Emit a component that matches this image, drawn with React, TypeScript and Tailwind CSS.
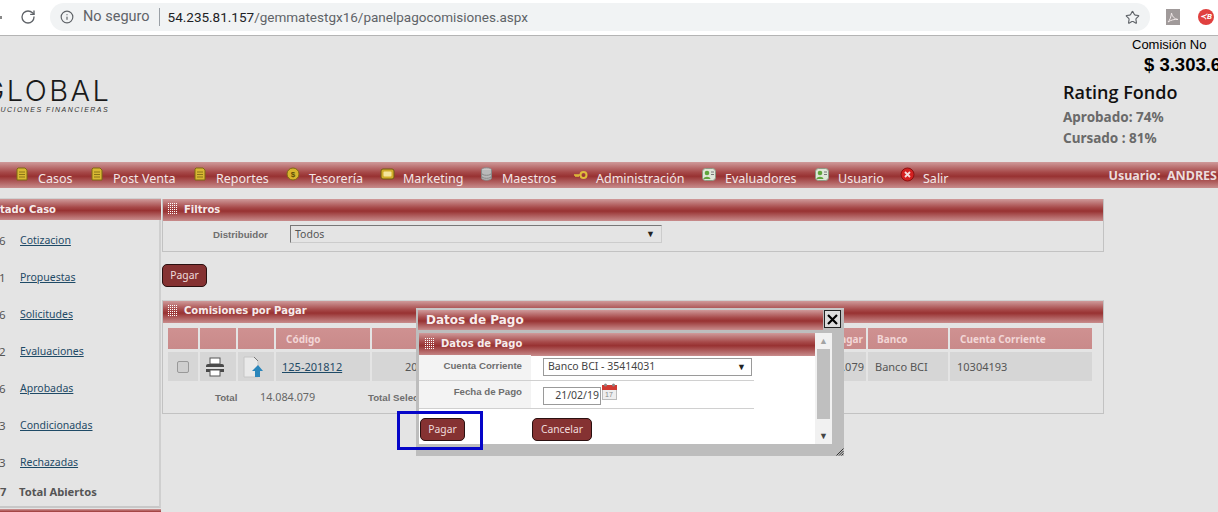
import { Info, RotateCw, Star } from "lucide-react";

const body = "font-['Noto_Sans',sans-serif]";
const bar = "bg-[linear-gradient(#cf9a9a,#a64848_40%,#983232_55%,#c88c8c)]";

function Grip() {
  return (
    <svg width="9" height="11" className="shrink-0">
      <defs>
        <pattern id="gp" width="2" height="2" patternUnits="userSpaceOnUse">
          <rect width="1" height="1" fill="#fff" />
        </pattern>
      </defs>
      <rect width="9" height="11" fill="url(#gp)" />
    </svg>
  );
}

function DocIcon() {
  return (
    <svg width="14" height="15" viewBox="0 0 14 15" className="shrink-0">
      <path d="M3 1h7l2 2v10H2V2z" fill="#d8b832" stroke="#7d6a14" />
      <path d="M4 5h6M4 7.5h6M4 10h6" stroke="#8a7518" />
    </svg>
  );
}
function CoinIcon() {
  return (
    <svg width="14" height="15" viewBox="0 0 14 15" className="shrink-0">
      <circle cx="7" cy="7" r="6" fill="#d8b42c" stroke="#7d6a14" />
      <text x="7" y="10" textAnchor="middle" fontSize="8" fontWeight="700" fill="#5c4c08" fontFamily="Liberation Sans">$</text>
    </svg>
  );
}
function ScreenIcon() {
  return (
    <svg width="15" height="13" viewBox="0 0 15 13" className="shrink-0">
      <rect x="1" y="1" width="13" height="10" rx="2" fill="#d2ae2a" stroke="#6f5d10" />
      <rect x="3.5" y="3.5" width="8" height="5" rx="1" fill="#f5e59a" />
    </svg>
  );
}
function DbIcon() {
  return (
    <svg width="13" height="15" viewBox="0 0 13 15" className="shrink-0">
      <ellipse cx="6.5" cy="3" rx="5" ry="2.2" fill="#c9c9c9" stroke="#888" />
      <path d="M1.500 3v8c0 1.300 2.200 2.300 5 2.300s5-1 5-2.300V3" fill="#b9b9b9" stroke="#888" />
      <path d="M1.500 6c0 1.300 2.200 2.300 5 2.300s5-1 5-2.300M1.500 9c0 1.300 2.200 2.300 5 2.300s5-1 5-2.300" fill="none" stroke="#888" />
    </svg>
  );
}
function KeyIcon() {
  return (
    <svg width="15" height="10" viewBox="0 0 15 10" className="shrink-0">
      <circle cx="10.500" cy="5" r="3" fill="none" stroke="#e0bd3a" strokeWidth="2" />
      <path d="M8 5H1M3 5v2M5 5v2" stroke="#e0bd3a" strokeWidth="1.500" />
    </svg>
  );
}
function UserIcon() {
  return (
    <svg width="14" height="13" viewBox="0 0 14 13" className="shrink-0">
      <rect x="0.500" y="0.500" width="13" height="12" rx="3" fill="#dfe7d8" stroke="#8c9a84" />
      <circle cx="5" cy="5" r="2.300" fill="#5fa53c" />
      <path d="M1.500 11c.6-3 6.400-3 7 0z" fill="#5fa53c" />
      <path d="M9 4h3M9 6.500h3" stroke="#777" />
    </svg>
  );
}
function CloseIcon() {
  return (
    <svg width="15" height="15" viewBox="0 0 15 15" className="shrink-0">
      <circle cx="7.500" cy="7.500" r="6.500" fill="#d42020" stroke="#8c1010" />
      <path d="M5 5l5 5M10 5l-5 5" stroke="#f6dede" strokeWidth="1.800" />
    </svg>
  );
}

const menu: [string, React.ReactNode, string][] = [
  ["Casos", <DocIcon />, "w-[36px]"],
  ["Post Venta", <DocIcon />, "w-[64px]"],
  ["Reportes", <DocIcon />, "w-[54px]"],
  ["Tesorería", <CoinIcon />, "w-[55px]"],
  ["Marketing", <ScreenIcon />, "w-[60px]"],
  ["Maestros", <DbIcon />, "w-[55px]"],
  ["Administración", <KeyIcon />, "w-[90px]"],
  ["Evaluadores", <UserIcon />, "w-[74px]"],
  ["Usuario", <UserIcon />, "w-[46px]"],
  ["Salir", <CloseIcon />, "w-[28px]"],
];

const states: [string, string][] = [
  ["6", "Cotizacion"],
  ["1", "Propuestas"],
  ["6", "Solicitudes"],
  ["2", "Evaluaciones"],
  ["6", "Aprobadas"],
  ["3", "Condicionadas"],
  ["3", "Rechazadas"],
];

function Btn({ children, className = "" }: { children: React.ReactNode; className?: string }) {
  return (
    <div className={`h-[23px] flex items-center justify-center rounded-[5px] border border-[#2a1010] bg-[#853232] text-[#f0dcdc] text-[10.300px] ${className}`}>
      {children}
    </div>
  );
}

function PanelHead({ title, className = "", textClass = "-mt-[1px]" }: { title: string; className?: string; textClass?: string }) {
  return (
    <div className={`h-[22px] flex items-center pl-[5px] gap-[7px] ${bar} ${className}`}>
      <div className="-mt-[3px]"><Grip /></div>
      <span className={`${textClass} font-['DejaVu_Sans',sans-serif] font-bold text-[10px] text-[#f6ecec]`}>{title}</span>
    </div>
  );
}

export default function App() {
  const th = "h-[21px] pt-[1px] bg-[linear-gradient(#cf9191,#c98a8a)] flex items-center text-[10px] font-bold text-[#f2d6d6]";
  const td = "h-[29px] pt-[1px] bg-[#d6d6d6] flex items-center text-[11px] text-[#555]";
  const label = "font-['Liberation_Sans',sans-serif] font-bold text-[9.700px] text-[#6e6e6e]";
  return (
    <div className={`relative w-[1218px] h-[512px] overflow-hidden bg-[#e4e4e4] ${body}`}>
      {/* browser toolbar */}
      <div className="h-[36px] bg-white border-b border-b-[#b4b4b4] flex items-center font-['Roboto',sans-serif]">
        <div className="w-[2px] h-[3px] bg-[#888] shrink-0" />
        <RotateCw size={16} strokeWidth={2} className="ml-[18px] text-[#5f6368] -mt-[1px]" />
        <div className="ml-[14px] w-[1100px] h-[28px] -mt-[1px] rounded-full bg-[#f1f3f4] flex items-center pl-[10px]">
          <Info size={14} strokeWidth={2} className="text-[#5f6368]" />
          <span className="ml-[9px] text-[#5f6368] text-[14.500px]">No seguro</span>
          <div className="ml-[9px] w-px h-[18px] bg-[#9aa0a6]" />
          <span className="ml-[8px] text-[#202124] text-[13.500px]">54.235.81.157</span>
          <span className="text-[#5f6368] text-[13.500px]">/gemmatestgx16/panelpagocomisiones.aspx</span>
          <Star size={15} strokeWidth={1.8} className="ml-auto mr-[10px] text-[#5f6368]" />
        </div>
        <div className="ml-[16px] w-[14px] h-[16px] -mt-[2px] bg-[#a09a9a] flex items-center justify-center">
          <svg width="12" height="12" viewBox="0 0 12 12">
            <path d="M1 11c2-2 3-5 3.500-9C5 5 7 8 11 8.500 7.500 8 4 9 1 11z" fill="none" stroke="#f0e8e8" />
          </svg>
        </div>
        <div className="ml-[18px] w-[16px] h-[16px] -mt-[2px] rounded-full bg-[#e0403f] flex items-center justify-center text-[8px] font-bold italic text-white">
          ≺B
        </div>
      </div>

      {/* header */}
      <div className="h-[126px] flex justify-between">
        <div className="pt-[40px] leading-none -ml-[30px]">
          <div className="font-['Inter',sans-serif] font-light text-[29px] tracking-[2.500px] text-[#1a1a1a] leading-[30px] w-[141.500px] text-right whitespace-nowrap">GLOBAL</div>
          <div className="w-[139px] text-right font-['Liberation_Sans',sans-serif] italic text-[7px] tracking-[1.450px] text-[#333] leading-[8px] whitespace-nowrap">LUCIONES&nbsp;FINANCIERAS</div>
        </div>
        <div className="w-[155px] shrink-0 whitespace-nowrap">
          <div className="pl-[69px] pt-[1px] font-['Liberation_Sans',sans-serif] text-[13px] leading-[16px] text-black">Comisión No</div>
          <div className="pl-[81px] font-['Liberation_Sans',sans-serif] font-bold text-[18.500px] leading-[24px] text-black">$ 3.303.6</div>
          <div className="mt-[3px] font-['Open_Sans',sans-serif] font-semibold text-[18px] leading-[24px] text-[#111]">Rating Fondo</div>
          <div className="mt-[3px] font-['Noto_Sans',sans-serif] font-bold text-[13.500px] leading-[21px] text-[#6a6a6a]">Aprobado: 74%</div>
          <div className="font-['Noto_Sans',sans-serif] font-bold text-[13.500px] leading-[21px] text-[#6a6a6a]">Cursado : 81%</div>
        </div>
      </div>

      {/* menu */}
      <div className={`h-[26px] flex items-center pl-[15px] pt-[4px] ${bar}`}>
        {menu.map(([label, icon, w]) => (
          <div key={label} className="flex items-center mr-[16px]">
            <div className="w-[14px] flex justify-center -mt-[5px]">{icon}</div>
            <span className={`ml-[9px] ${w} whitespace-nowrap text-[12.500px] text-[#f4e6e6] mt-[4px]`}>{label}</span>
          </div>
        ))}
        <span className="ml-auto mr-[1px] whitespace-nowrap text-[12.500px] font-bold text-[#ecdcdc] -mt-[1px]">Usuario:&nbsp; ANDRES</span>
      </div>

      {/* body */}
      <div className="flex pt-[10px]">
        <aside className="w-[161px] shrink-0">
          <div className={`h-[22px] flex items-center pl-0 border-t border-t-[#d0d0d0] ${bar}`}>
            <span className="-mt-[1px] font-['DejaVu_Sans',sans-serif] font-bold text-[10px] text-[#f6ecec]">tado Caso</span>
          </div>
          <div className="border-r-2 border-r-[#cfcfcf] border-b-2 border-b-[#c8c8c8] h-[288px]">
            <div className="pt-[2px]">
              {states.map(([n, s]) => (
                <div key={s} className="h-[37px] flex items-center text-[10.500px] text-[#555]">
                  <span className="w-[21px] -ml-[1px] text-[11.500px]">{n}</span>
                  <span className="underline text-[#1e4a66]">{s}</span>
                </div>
              ))}
            </div>
            <div className="h-[22px] flex items-center text-[11.200px] font-bold text-[#555]">
              <span className="w-[19px]">7</span>
              <span>Total Abiertos</span>
            </div>
          </div>
          <div className={`h-[6px] mt-[1px] ${bar}`} />
        </aside>

        <main className="ml-[1px] w-[942px] shrink-0">
          <section className="h-[53px] mt-[1px] border border-[#c2c2c2] border-t-0">
            <PanelHead title="Filtros" />
            <div className="flex items-start pt-[4px] h-[30px]">
              <span className={`ml-[50px] w-[77px] leading-[19px] ${label}`}>Distribuidor</span>
              <div className="h-[18px] w-[372px] bg-[#e4e4e4] border border-[#777] border-b-[#ccc] border-r-[#ccc] flex items-center px-[4px] text-[10.500px] text-[#555]">
                <span className="pt-[2px]">Todos</span>
                <span className="ml-auto mr-[2px] text-[9px] text-[#222]">▼</span>
              </div>
            </div>
          </section>

          <Btn className="w-[45px] mt-[12px]">Pagar</Btn>

          <section className="h-[114px] mt-[13px] border border-[#c2c2c2] border-t-[#d0d0d0]">
            <PanelHead title="Comisiones por Pagar" textClass="-mt-[3px]" />
            <div className="mt-[5px] ml-[5px] grid grid-cols-[30px_36px_36px_94px_300px_192px_80px_142px] gap-x-[2px] gap-y-[3px]">
              <div className={th} />
              <div className={th} />
              <div className={th} />
              <div className={`${th} pl-[10px]`}>Código</div>
              <div className={th} />
              <div className={`${th} justify-end pr-[3px]`}>A Pagar</div>
              <div className={`${th} pl-[9px]`}>Banco</div>
              <div className={`${th} pl-[10px]`}>Cuenta Corriente</div>

              <div className={`${td} justify-center`}>
                <div className="w-[12px] h-[12px] rounded-[2px] border border-[#999] bg-[#cfcfcf]" />
              </div>
              <div className={`${td} justify-center pr-[6px]`}>
                <svg width="22" height="20" viewBox="0 0 22 20">
                  <rect x="6" y="1" width="10" height="6" fill="#fff" stroke="#555" />
                  <path d="M2 9a2 2 0 0 1 2-2h14a2 2 0 0 1 2 2v6H2z" fill="#4a4a4a" />
                  <rect x="2" y="10" width="18" height="2" fill="#ddd" />
                  <rect x="6" y="13" width="10" height="6" fill="#fff" stroke="#555" />
                </svg>
              </div>
              <div className={`${td} justify-center pr-[6px]`}>
                <svg width="22" height="22" viewBox="0 0 22 22">
                  <path d="M2 1h10l4 4v16H2z" fill="#e9e9e9" stroke="#c6c6c6" />
                  <path d="M12 1l4 4" stroke="#777" />
                  <path d="M16 9l5 6h-3v6h-5v-6h-3z" fill="#2a86bb" />
                </svg>
              </div>
              <div className={`${td} pl-[6px]`}><span className="underline text-[#1e4a66]">125-201812</span></div>
              <div className={`${td} pl-[33px]`}>2018-12</div>
              <div className={`${td} justify-end pr-[2px]`}>14.084.079</div>
              <div className={`${td} pl-[7px] text-[10.500px]`}>Banco BCI</div>
              <div className={`${td} pl-[7px]`}>10304193</div>
            </div>
            <div className="flex items-center h-[34px]">
              <span className={`ml-[52px] w-[45px] ${label}`}>Total</span>
              <span className="w-[108px] text-[10.800px] text-[#666] -mt-[2px]">14.084.079</span>
              <span className={`whitespace-nowrap ${label}`}>Total Seleccionado</span>
            </div>
          </section>
        </main>
      </div>

      {/* modal */}
      <div className="absolute left-[416px] top-[308px] w-[428px] h-[148px] bg-[#bdbdbd] border-t-2 border-t-[#c8c8c8]">
        <div className="flex items-start pl-[2px]">
          <div className={`w-[405px] h-[20px] flex items-center pl-[8px] font-['DejaVu_Sans',sans-serif] font-bold text-[12px] text-[#f8eeee] ${bar}`}>Datos de Pago</div>
          <div className="ml-[1px] w-[17px] h-[18px] bg-[#dcdcdc] border border-[#222] flex items-center justify-center">
            <svg width="11" height="11" viewBox="0 0 11 11"><path d="M1 1l9 9M10 1l-9 9" stroke="#000" strokeWidth="2.200" /></svg>
          </div>
        </div>
        <div className="flex mt-[3px] ml-[3px]">
          <div className="w-[396px] h-[111px] bg-white">
            <PanelHead title="Datos de Pago" className="h-[23px] gap-[6px] pl-[6px]" textClass="-mt-[3px]" />
            <div className="w-[335px] flex h-[26px] border-b border-b-[#d0d0d0] -mt-px">
              <div className={`w-[112px] h-full bg-[#f3f3f3] pt-[4px] pr-[9px] text-right ${label}`}>Cuenta Corriente</div>
              <div className="ml-[12px] mt-[3px] w-[209px] h-[18px] bg-white border border-[#9a9a9a] flex items-center pl-[4px] text-[10.500px] text-[#444]">
                <span>Banco BCI - 35414031</span>
                <span className="ml-auto mr-[5px] text-[9px] text-[#222]">▼</span>
              </div>
            </div>
            <div className="w-[335px] flex h-[28px] border-b border-b-[#d0d0d0]">
              <div className={`w-[112px] h-full bg-[#f3f3f3] pt-[4px] pr-[9px] text-right ${label}`}>Fecha de Pago</div>
              <div className="ml-[12px] mt-[6px] w-[58px] h-[18px] border border-[#9a9a9a] flex items-center justify-end pr-[1px] text-[10.500px] text-[#444]">21/02/19</div>
              <svg width="15" height="17" viewBox="0 0 15 17" className="ml-[1px] mt-[2px]">
                <rect x="0.500" y="2.500" width="14" height="14" fill="#eee" stroke="#bbb" />
                <rect x="0" y="2" width="15" height="5" fill="#d03a32" />
                <circle cx="3.500" cy="2" r="1.500" fill="#888" />
                <circle cx="11.500" cy="2" r="1.500" fill="#888" />
                <text x="7" y="14" textAnchor="middle" fontSize="7" fill="#888" fontFamily="Liberation Sans">17</text>
              </svg>
            </div>
            <div className="flex pt-[9px] pl-[1px]">
              <Btn className="w-[45px]">Pagar</Btn>
              <Btn className="w-[60px] ml-[67px]">Cancelar</Btn>
            </div>
          </div>
          <div className="w-[17px] h-[111px] bg-[#f1f1f1] flex flex-col items-center">
            <div className="h-[16px] flex items-center text-[9px] text-[#a3a3a3]">▲</div>
            <div className="w-[13px] h-[70px] bg-[#bfbfbf]" />
            <div className="mt-auto h-[16px] flex items-center text-[9px] text-[#444]">▼</div>
          </div>
        </div>
        <svg width="8" height="8" viewBox="0 0 8 8" className="absolute right-0 bottom-0">
          <path d="M7.500 0.500l-7 7M7.500 3l-4.500 4.500M7.500 5.500l-2 2" stroke="#333" />
        </svg>
      </div>

      {/* annotation */}
      <div className="absolute left-[397px] top-[411px] w-[86px] h-[39px] border-[3px] border-[#0505c8]" />
    </div>
  );
}
